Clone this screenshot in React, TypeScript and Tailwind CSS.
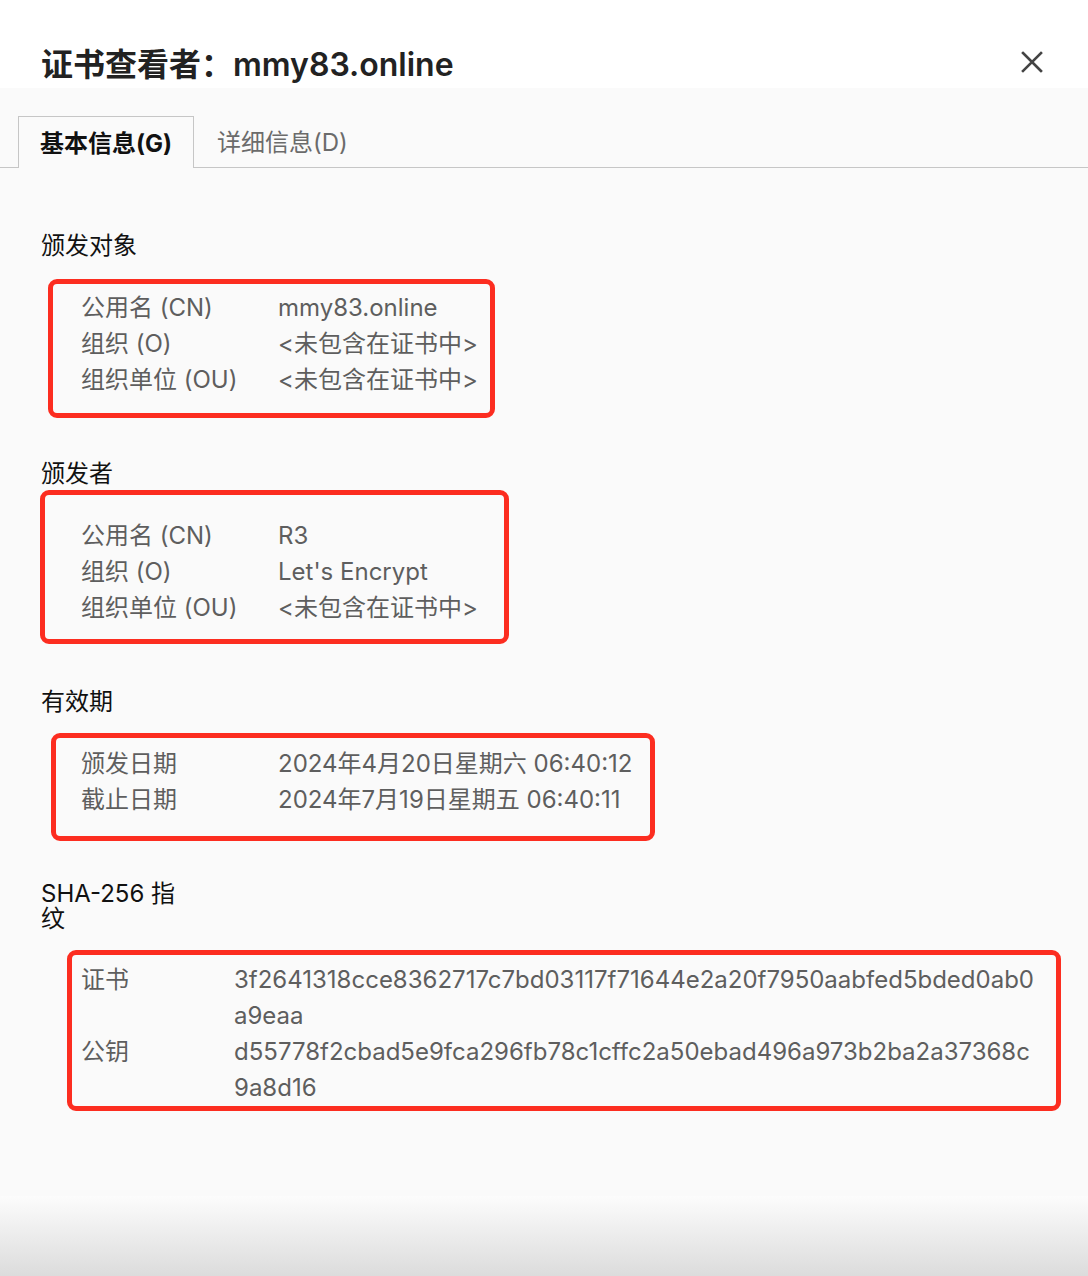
import React from "react";

type Row = {
  label: string;
  value: string[];
};

type Group = {
  title: string[];
  rows: Row[];
  box: string;
  titleClass: string;
  labelWidth: string;
};

const groups: Group[] = [
  {
    title: ["颁发对象"],
    titleClass: "mt-[64px] leading-[28px]",
    box: "mt-[19px] ml-[48px] w-[447px] pl-[28px] pt-[6px] pb-[15px]",
    labelWidth: "w-[197px]",
    rows: [
      { label: "公用名 (CN)", value: ["mmy83.online"] },
      { label: "组织 (O)", value: ["<未包含在证书中>"] },
      { label: "组织单位 (OU)", value: ["<未包含在证书中>"] },
    ],
  },
  {
    title: ["颁发者"],
    titleClass: "mt-[42px] leading-[28px]",
    box: "mt-[2px] ml-[40px] w-[469px] pl-[36px] pt-[23px] pb-[13px]",
    labelWidth: "w-[197px]",
    rows: [
      { label: "公用名 (CN)", value: ["R3"] },
      { label: "组织 (O)", value: ["Let's Encrypt"] },
      { label: "组织单位 (OU)", value: ["<未包含在证书中>"] },
    ],
  },
  {
    title: ["有效期"],
    titleClass: "mt-[44px] leading-[28px]",
    box: "mt-[17px] ml-[51px] w-[604px] pl-[25px] pt-[8px] pb-[18px]",
    labelWidth: "w-[197px]",
    rows: [
      { label: "颁发日期", value: ["2024年4月20日星期六 06:40:12"] },
      { label: "截止日期", value: ["2024年7月19日星期五 06:40:11"] },
    ],
  },
  {
    title: ["SHA-256 指", "纹"],
    titleClass: "mt-[40px] leading-[25px]",
    box: "mt-[19px] ml-[67px] w-[994px] pl-[9px] pt-[7px] pb-0",
    labelWidth: "w-[153px]",
    rows: [
      {
        label: "证书",
        value: [
          "3f2641318cce8362717c7bd03117f71644e2a20f7950aabfed5bded0ab0",
          "a9eaa",
        ],
      },
      {
        label: "公钥",
        value: [
          "d55778f2cbad5e9fca296fb78c1cffc2a50ebad496a973b2ba2a37368c",
          "9a8d16",
        ],
      },
    ],
  },
];

function CloseIcon() {
  return (
    <svg width="24" height="24" viewBox="0 0 24 24" className="text-[#444]">
      <path
        d="M3 3 L21 21 M21 3 L3 21"
        stroke="currentColor"
        strokeWidth="2.6"
        strokeLinecap="square"
        fill="none"
      />
    </svg>
  );
}

export default function App() {
  return (
    <div className="flex h-[1276px] w-[1088px] flex-col overflow-hidden bg-[#fafafa] font-['Inter','Noto_Sans_CJK_SC',sans-serif]">
      {/* header */}
      <header className="flex h-[88px] items-start justify-between bg-white pl-[41px] pr-[44px] pt-[44px]">
        <h1 className="text-[32px] font-semibold leading-[42px] text-[#222]">
          证书查看者：mmy83.online
        </h1>
        <button className="mt-[6px]">
          <CloseIcon />
        </button>
      </header>

      {/* tabs */}
      <nav className="flex h-[80px] items-end border-b border-[#c6c6c6] pl-[18px]">
        <div className="-mb-px flex h-[52px] w-[176px] items-center justify-center border border-b-0 border-[#c6c6c6] bg-[#fafafa] pt-[3px] text-[24px] font-bold text-[#111]">
          基本信息(G)
        </div>
        <div className="flex h-[52px] items-center pl-[23px] pt-[3px] text-[24px] text-[#6b6b6b]">
          详细信息(D)
        </div>
      </nav>

      <main>
        {groups.map((g) => (
          <section key={g.title.join("")}>
            <h2
              className={`ml-[41px] w-[150px] text-[24px] text-[#111] ${g.titleClass}`}
            >
              {g.title.map((t) => (
                <span key={t} className="block">
                  {t}
                </span>
              ))}
            </h2>
            <div
              className={`rounded-[9px] border-[5px] border-[#fc2d20] ${g.box}`}
            >
              {g.rows.map((r) => (
                <div
                  key={r.label}
                  className="flex text-[24px] leading-[36px] text-[#5e5e5e]"
                >
                  <div className={`shrink-0 ${g.labelWidth}`}>{r.label}</div>
                  <div className="whitespace-nowrap">
                    {r.value.map((v) => (
                      <div key={v}>{v}</div>
                    ))}
                  </div>
                </div>
              ))}
            </div>
          </section>
        ))}
      </main>

      <div className="mt-auto h-[80px] bg-gradient-to-b from-[#fcfcfc] to-[#dcdcdc]" />
    </div>
  );
}
